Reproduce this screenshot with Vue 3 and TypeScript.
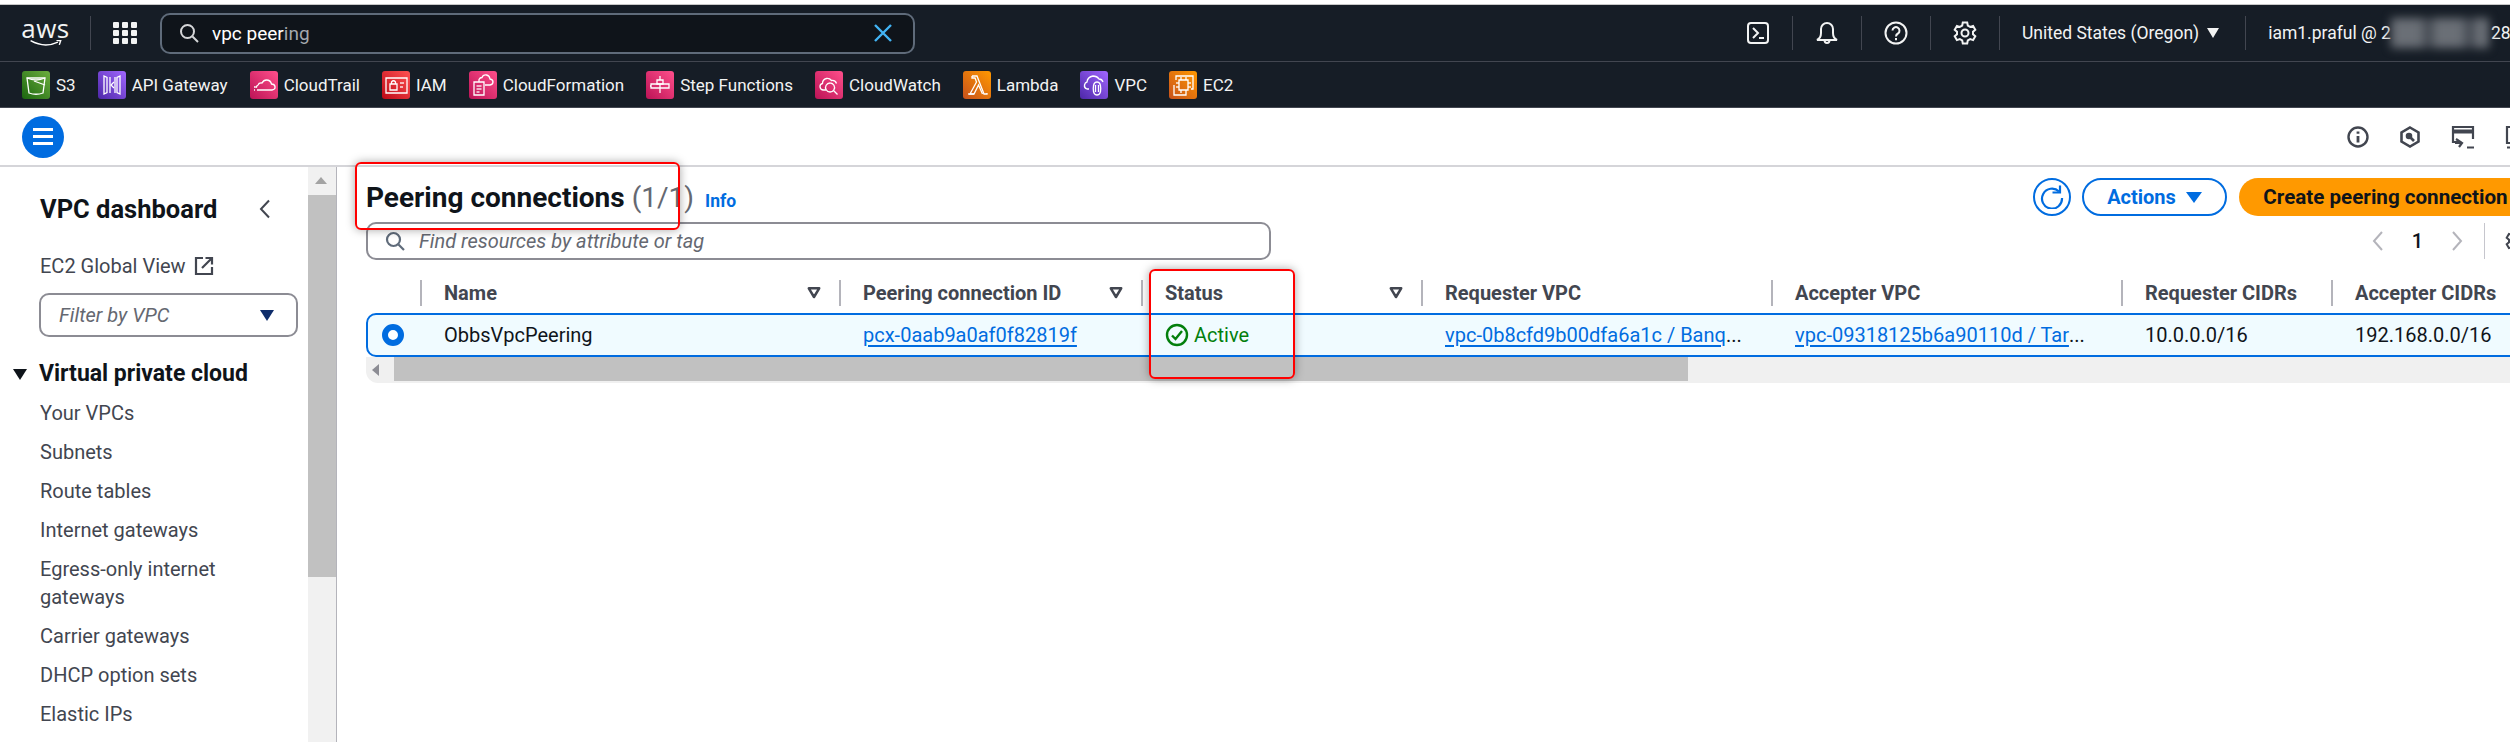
<script setup lang="ts">
interface Service {
  name: string
  tone: string
  paths: string[]
}

const services: Service[] = [
  { name: 'S3', tone: 'green', paths: ['M5 7h18l-2 15q-7 2.5-14 0z', 'M5 7q9 4 18 0', 'M12 10l11 4'] },
  { name: 'API Gateway', tone: 'purple', paths: ['M6 5v18l3-1.5v-15z', 'M22 5v18l-3-1.5v-15z', 'M12 6v16', 'M17 6v16', 'M16 11l-3 3 3 3'] },
  { name: 'CloudTrail', tone: 'pink', paths: ['M7 19h15q3.500-.5 3-3.500-.5-2.500-3.500-2.500-1-4-5-4-3 0-4.500 3-3-.5-4 2-1.500.5-1.500 2.500', 'M4 16h3', 'M4 19h1'] },
  { name: 'IAM', tone: 'red', paths: ['M4 7h21v15H4z', 'M8 13h7v6H8z', 'M9.500 13v-2q2-2.500 4 0v2', 'M18 12h4', 'M18 16h3'] },
  { name: 'CloudFormation', tone: 'pink', paths: ['M5 11h10v13H5z', 'M7.500 15h5', 'M7.500 18h5', 'M7.500 21h3', 'M10 11V8.500q1-2 3-2 1-3 4.500-2.500 3 .5 3.500 4 3 .5 3 3t-3 3h-5'] },
  { name: 'Step Functions', tone: 'pink', paths: ['M11 9h6v4h-6z', 'M5 13h18v4H5z', 'M14 5v4', 'M14 17v5', 'M14 13v4', 'M5 15h-1'] },
  { name: 'CloudWatch', tone: 'pink', paths: ['M11 19H8q-3-.5-3-3.500 0-2.500 2.500-3 0-4 4-5 3-.5 5 2 4-.5 5 3', 'M15 12a4.500 4.500 0 1 0 .1 0', 'M18.500 19.500l4 4'] },
  { name: 'Lambda', tone: 'orange', paths: ['M9 5h5l7 18h3v-1', 'M9 5v2h3l1.500 4L7 23h4l4.500-9 4 9', 'M5 23h6'] },
  { name: 'VPC', tone: 'purple', paths: ['M9 18H7q-3-1-2.500-4 .5-2.500 2.500-3 .5-5 6-6 4 0 6 3 3 0 4 3', 'M17 11c-5 0-5 13 0 13s5-13 0-13', 'M15.500 14v7', 'M18.500 14v7'] },
  { name: 'EC2', tone: 'orange', paths: ['M10 9h9v10h-9z', 'M12 6v3', 'M17 6v3', 'M12 19v3', 'M17 19v3', 'M7 12h3', 'M7 16h3', 'M19 12h3', 'M19 16h3', 'M7 9V5h17v13h-2', 'M5 14v10h12v-2'] },
]

const navItems = [
  'Your VPCs',
  'Subnets',
  'Route tables',
  'Internet gateways',
  'Egress-only internet gateways',
  'Carrier gateways',
  'DHCP option sets',
  'Elastic IPs',
]

const columns = [
  { label: 'Name', filter: true },
  { label: 'Peering connection ID', filter: true },
  { label: 'Status', filter: true },
  { label: 'Requester VPC', filter: false },
  { label: 'Accepter VPC', filter: false },
  { label: 'Requester CIDRs', filter: false },
  { label: 'Accepter CIDRs', filter: false },
]
</script>

<template>
  <div class="page">
    <div class="top-line"></div>

    <header class="nav">
      <div class="aws-logo">
        <span class="aws-word">aws</span>
        <svg class="aws-smile" viewBox="0 0 46 10" width="46" height="10" fill="none">
          <path d="M1 1q20 11 39 2" stroke="#fff" stroke-width="2" />
          <path d="M38 .5l6 .5-2 6" stroke="#fff" stroke-width="2" />
        </svg>
      </div>
      <span class="nav-rule logo-rule"></span>
      <svg class="grid-icon" viewBox="0 0 24 22" width="24" height="22" fill="#f2f3f3">
        <rect v-for="c in 9" :key="c" :x="((c - 1) % 3) * 9" :y="Math.floor((c - 1) / 3) * 8" width="6" height="6" rx="1" />
      </svg>
      <div class="search">
        <svg viewBox="0 0 20 20" width="20" height="20" fill="none" stroke="#d5d6d8" stroke-width="2">
          <circle cx="8.500" cy="8.500" r="6.500" />
          <path d="M13.500 13.500l5.500 5.500" />
        </svg>
        <span class="search-text">vpc peer<span class="search-rest">ing</span></span>
        <svg class="clear" viewBox="0 0 20 20" width="20" height="20" fill="none" stroke="#42b4f5" stroke-width="2.400">
          <path d="M2 2l16 16M18 2L2 18" />
        </svg>
      </div>

      <div class="nav-right">
        <svg viewBox="0 0 24 24" width="24" height="24" fill="none" stroke="#f2f3f3" stroke-width="2">
          <rect x="2" y="2" width="20" height="20" rx="3" />
          <path d="M7 7l5 5-5 5M13 17h5" />
        </svg>
        <span class="nav-rule"></span>
        <svg viewBox="0 0 24 24" width="24" height="24" fill="none" stroke="#f2f3f3" stroke-width="2">
          <path d="M2 19q4-2 4-7V8a6 6 0 0 1 12 0v4q0 5 4 7z" />
          <path d="M9.500 19a2.500 3 0 0 0 5 0" />
        </svg>
        <span class="nav-rule"></span>
        <svg viewBox="0 0 24 24" width="24" height="24" fill="none" stroke="#f2f3f3" stroke-width="2">
          <circle cx="12" cy="12" r="10.500" />
          <path d="M8.500 9.500a3.500 3.500 0 1 1 5.500 3q-2 1-2 3" />
          <path d="M12 17v2.200" />
        </svg>
        <span class="nav-rule"></span>
        <svg viewBox="0 0 24 24" width="24" height="24" fill="none" stroke="#f2f3f3" stroke-width="2">
          <circle cx="12" cy="12" r="3.500" />
          <path d="M9.800 1.500h4.400l.6 3 2.400 1.400 2.900-1 2.200 3.800-2.300 2v2.600l2.300 2-2.200 3.800-2.900-1-2.400 1.400-.6 3H9.800l-.6-3-2.400-1.400-2.900 1-2.200-3.800 2.300-2v-2.600l-2.300-2 2.200-3.800 2.900 1 2.400-1.400z" />
        </svg>
        <span class="nav-rule"></span>
        <span class="region">United States (Oregon)</span>
        <i class="caret-white"></i>
        <span class="nav-rule"></span>
        <span class="account">iam1.praful @ 2<span class="smudge"></span>284</span>
      </div>
    </header>

    <nav class="services">
      <div v-for="s in services" :key="s.name" class="service">
        <span class="service-icon" :class="s.tone">
          <svg viewBox="0 0 28 28" width="28" height="28" fill="none" stroke="#fff" stroke-width="1.300">
            <path v-for="d in s.paths" :key="d" :d="d" />
          </svg>
        </span>
        <span>{{ s.name }}</span>
      </div>
    </nav>

    <div class="toolbar">
      <span class="burger"><i></i><i></i><i></i></span>
      <div class="tools">
        <svg viewBox="0 0 22 22" width="22" height="22" fill="none" stroke="#424650" stroke-width="2.400">
          <circle cx="11" cy="11" r="9.500" />
          <path d="M11 10v6.500M11 5.500v2.200" stroke-width="2.800" />
        </svg>
        <svg viewBox="0 0 22 22" width="22" height="22" fill="none" stroke="#424650" stroke-width="2.600">
          <path d="M11 1.500l8.500 5v9l-8.500 5-8.500-5v-9z" />
          <path d="M15 15l-4-4" />
          <circle cx="10" cy="10" r="2" fill="#424650" />
        </svg>
        <svg viewBox="0 0 24 24" width="24" height="24" fill="none" stroke="#424650" stroke-width="2.200">
          <path d="M9 17H2V2h20v12" />
          <path d="M2 6.500h20" stroke-width="4" />
          <path d="M5 14l6 4-3 4M4 18h7M16 22.500h7" />
        </svg>
        <svg viewBox="0 0 24 24" width="24" height="24" fill="none" stroke="#424650" stroke-width="2.200">
          <path d="M2 18V2h20v16zM2 22.500h20" />
        </svg>
      </div>
    </div>

    <div class="main">
      <aside class="sidebar">
        <div class="side-body">
          <div class="side-head">
            <h2>VPC dashboard</h2>
            <svg viewBox="0 0 14 20" width="14" height="20" fill="none" stroke="#424650" stroke-width="2">
              <path d="M11 1.500L3 10l8 8.500" />
            </svg>
          </div>
          <div class="global-view">
            <span>EC2 Global View</span>
            <svg viewBox="0 0 20 20" width="20" height="20" fill="none" stroke="#424650" stroke-width="2.200">
              <path d="M9 2H2v16h16v-7" />
              <path d="M8 12L18 2M11.500 2H18v6.500" />
            </svg>
          </div>
          <div class="vpc-filter">
            <em>Filter by VPC</em>
            <i class="caret-navy"></i>
          </div>
          <div class="side-section"><i class="caret-black"></i>Virtual private cloud</div>
          <ul class="side-list">
            <li v-for="item in navItems" :key="item">{{ item }}</li>
          </ul>
        </div>
        <div class="side-scroll">
          <i class="scroll-up"></i>
          <div class="side-thumb"></div>
        </div>
      </aside>

      <section class="content">
        <div class="head-row">
          <h1>Peering connections <span class="count">(1/1)</span></h1>
          <a class="info">Info</a>
          <div class="actions">
            <span class="refresh">
              <svg viewBox="0 0 24 24" width="24" height="24" fill="none" stroke="#006ce0" stroke-width="2.200">
                <path d="M19 6.500A10 10 0 1 0 22 13" />
                <path d="M12.500 7.500h7.500V0.500" />
              </svg>
            </span>
            <button class="btn-actions">Actions <i class="caret-blue"></i></button>
            <button class="btn-create">Create peering connection</button>
          </div>
        </div>

        <div class="filter-row">
          <div class="find">
            <svg viewBox="0 0 20 20" width="20" height="20" fill="none" stroke="#5f6b7a" stroke-width="2.200">
              <circle cx="8.500" cy="8.500" r="6.500" />
              <path d="M13.500 13.500l5.500 5.500" />
            </svg>
            <em>Find resources by attribute or tag</em>
          </div>
          <div class="pager">
            <svg viewBox="0 0 12 22" width="12" height="22" fill="none" stroke="#b4b4bb" stroke-width="2">
              <path d="M10 2L2 11l8 9" />
            </svg>
            <span class="page-no">1</span>
            <svg viewBox="0 0 12 22" width="12" height="22" fill="none" stroke="#b4b4bb" stroke-width="2">
              <path d="M2 2l8 9-8 9" />
            </svg>
            <span class="pager-rule"></span>
            <svg viewBox="0 0 24 24" width="24" height="24" fill="none" stroke="#424650" stroke-width="2">
              <circle cx="12" cy="12" r="3.500" />
              <path d="M9.800 1.500h4.400l.6 3 2.400 1.400 2.900-1 2.200 3.800-2.300 2v2.600l2.300 2-2.200 3.800-2.900-1-2.400 1.400-.6 3H9.800l-.6-3-2.400-1.400-2.900 1-2.200-3.800 2.300-2v-2.600l-2.300-2 2.200-3.800 2.900 1 2.400-1.400z" />
            </svg>
          </div>
        </div>

        <div class="table-grid table-head">
          <span class="head-cell radio-cell"></span>
          <div v-for="col in columns" :key="col.label" class="head-cell">
            <span>{{ col.label }}</span>
            <svg v-if="col.filter" class="sort" viewBox="0 0 14 12" width="14" height="12" fill="none" stroke="#424650" stroke-width="2.500">
              <path d="M1.800 1.300h10.400L7 10z" stroke-linejoin="round" />
            </svg>
          </div>
        </div>

        <div class="table-grid table-row">
          <span class="radio"></span>
          <span class="cell">ObbsVpcPeering</span>
          <span class="cell"><a class="link">pcx-0aab9a0af0f82819f</a></span>
          <span class="cell active">
            <svg viewBox="0 0 24 24" width="24" height="24" fill="none" stroke="#037f0c" stroke-width="2.400">
              <circle cx="12" cy="12" r="10" />
              <path d="M7 12.500l3.500 3.500L17 8" />
            </svg>
            Active
          </span>
          <span class="cell"><a class="link">vpc-0b8cfd9b00dfa6a1c / Banq</a>...</span>
          <span class="cell"><a class="link">vpc-09318125b6a90110d / Tar</a>...</span>
          <span class="cell">10.0.0.0/16</span>
          <span class="cell">192.168.0.0/16</span>
        </div>

        <div class="table-scroll">
          <i class="scroll-left"></i>
          <div class="table-thumb"></div>
        </div>
      </section>
    </div>

    <div class="callout callout-title"></div>
    <div class="callout callout-status"></div>
  </div>
</template>

<style>
html,
body {
  margin: 0;
  background: #fff;
}
</style>

<style scoped>
.page {
  position: relative;
  width: 2510px;
  height: 742px;
  overflow: hidden;
  background: #fff;
  color: #0f141a;
  font-family: Roboto, "Open Sans", sans-serif;
  font-size: 20px;
}

.top-line {
  height: 5px;
  box-sizing: border-box;
  border-bottom: 1px solid #c8c8c8;
}

.nav {
  display: flex;
  align-items: center;
  height: 56px;
  padding-left: 23px;
  background: #161d26;
  border-bottom: 1px solid #424650;
  color: #f2f3f3;
}

.nav > * {
  flex-shrink: 0;
}

.aws-logo {
  display: flex;
  flex-direction: column;
  align-items: center;
  width: 45px;
  height: 30px;
  margin-top: -2px;
}

.aws-word {
  font-family: "Open Sans", sans-serif;
  font-size: 26px;
  line-height: 22px;
  letter-spacing: 0.5px;
}

.aws-smile {
  margin-top: 1px;
}

.nav-rule {
  width: 1px;
  height: 34px;
  background: #424650;
}

.logo-rule {
  margin: 0 22px;
}

.grid-icon {
  margin-right: 23px;
}

.search {
  display: flex;
  align-items: center;
  width: 755px;
  height: 41px;
  box-sizing: border-box;
  padding: 0 20px 0 17px;
  background: #0f141a;
  border: 2px solid #5f6b7a;
  border-radius: 10px;
  font-size: 19px;
}

.search-text {
  margin-left: 13px;
  color: #fff;
}

.search-rest {
  color: #a4a8ad;
}

.clear {
  margin-left: auto;
}

.nav-right {
  display: flex;
  align-items: center;
  gap: 22px;
  margin-left: 831px;
  white-space: nowrap;
  font-size: 17.500px;
}

.region {
  margin-right: -14px;
}

.caret-white {
  width: 0;
  height: 0;
  margin-right: 4px;
  border: 6px solid transparent;
  border-top: 10px solid #f2f3f3;
  border-bottom: 0;
}

.account {
  display: flex;
  align-items: center;
}

.smudge {
  width: 98px;
  height: 30px;
  margin-right: 2px;
  background: linear-gradient(90deg, #6a6f76 0 30%, #3a4049 38%, #6a6f76 46% 72%, #3a4049 80%, #6a6f76 88%);
  filter: blur(5px);
}

.services {
  display: flex;
  align-items: center;
  gap: 22px;
  height: 45px;
  padding-left: 22px;
  background: #161d26;
  border-bottom: 1px solid #424650;
  color: #f2f3f3;
  font-size: 17px;
  white-space: nowrap;
}

.service {
  display: flex;
  align-items: center;
  gap: 6px;
}

.service-icon {
  display: block;
  width: 28px;
  height: 28px;
  border-radius: 3px;
}

.service-icon svg {
  display: block;
}

.green {
  background: linear-gradient(45deg, #1b660f, #6cae3e);
}

.purple {
  background: linear-gradient(45deg, #4d27a8, #a166ff);
}

.pink {
  background: linear-gradient(45deg, #bc1356, #ff4f8b);
}

.red {
  background: linear-gradient(45deg, #bd0816, #ff5252);
}

.orange {
  background: linear-gradient(45deg, #c8511b, #ff9900);
}

.toolbar {
  display: flex;
  align-items: center;
  height: 57px;
  padding-left: 22px;
  background: #fff;
}

.burger {
  display: flex;
  flex-direction: column;
  align-items: center;
  justify-content: center;
  gap: 4px;
  width: 42px;
  height: 42px;
  border-radius: 50%;
  background: #006ce0;
}

.burger i {
  width: 20px;
  height: 3px;
  background: #fff;
}

.tools {
  display: flex;
  align-items: center;
  gap: 30px;
  margin-left: auto;
  margin-right: -19px;
}

.main {
  display: flex;
  height: 576px;
  border-top: 2px solid #d5d5d9;
}

.sidebar {
  display: flex;
  width: 337px;
  flex-shrink: 0;
  box-sizing: border-box;
  border-right: 1px solid #b4b4bb;
}

.side-body {
  width: 308px;
  flex-shrink: 0;
  box-sizing: border-box;
  padding: 28px 10px 0 0;
}

.side-head {
  display: flex;
  align-items: center;
  justify-content: space-between;
  height: 28px;
  padding: 0 26px 0 40px;
}

.side-head h2 {
  margin: 0;
  font-size: 25.500px;
  font-weight: 700;
}

.global-view {
  display: flex;
  align-items: center;
  gap: 8px;
  margin: 31px 0 0 40px;
  color: #424650;
}

.vpc-filter {
  display: flex;
  align-items: center;
  justify-content: space-between;
  height: 44px;
  box-sizing: border-box;
  margin: 15px 0 0 39px;
  padding: 0 22px 0 18px;
  border: 2px solid #8c8c94;
  border-radius: 10px;
  color: #656871;
}

.caret-navy {
  border: 7px solid transparent;
  border-top: 11px solid #0f2d6b;
  border-bottom: 0;
}

.side-section {
  position: relative;
  margin: 24px 0 0 39px;
  font-size: 23px;
  font-weight: 700;
  line-height: 26px;
}

.caret-black {
  position: absolute;
  left: -26px;
  top: 8px;
  border: 7px solid transparent;
  border-top: 11px solid #0f141a;
  border-bottom: 0;
}

.side-list {
  margin: 12px 0 0;
  padding: 0 30px 0 40px;
  list-style: none;
  color: #424650;
  line-height: 28px;
}

.side-list li {
  margin-bottom: 11px;
}

.side-scroll {
  position: relative;
  flex: 1;
  background: #f1f1f1;
  padding-top: 28px;
}

.scroll-up {
  position: absolute;
  left: 7px;
  top: 10px;
  border: 6px solid transparent;
  border-bottom: 7px solid #a3a3a3;
  border-top: 0;
}

.side-thumb {
  height: 382px;
  background: #c1c1c1;
}

.content {
  flex: 1;
  min-width: 0;
  padding: 11px 0 0 29px;
}

.head-row {
  display: flex;
  align-items: center;
  height: 38px;
}

h1 {
  margin: 0;
  font-size: 28px;
  font-weight: 700;
  white-space: nowrap;
}

.count {
  color: #656871;
  font-weight: 400;
}

.info {
  margin: 7px 0 0 11px;
  color: #006ce0;
  font-size: 17.500px;
  font-weight: 700;
}

.actions {
  display: flex;
  align-items: center;
  margin-left: auto;
  margin-right: -22px;
}

.refresh {
  display: flex;
  align-items: center;
  justify-content: center;
  width: 38px;
  height: 38px;
  box-sizing: border-box;
  border: 2px solid #006ce0;
  border-radius: 50%;
}

button {
  font: inherit;
  font-weight: 700;
  height: 38px;
  border-radius: 19px;
  white-space: nowrap;
}

.btn-actions {
  display: flex;
  align-items: center;
  justify-content: center;
  gap: 10px;
  width: 145px;
  margin: 0 12px 0 11px;
  padding: 0;
  background: #fff;
  border: 2px solid #006ce0;
  color: #006ce0;
}

.caret-blue {
  border: 8px solid transparent;
  border-top: 11px solid #006ce0;
  border-bottom: 0;
}

.btn-create {
  width: 293px;
  padding: 0;
  background: #ff9900;
  border: 0;
  color: #0f141a;
  font-size: 20.600px;
}

.filter-row {
  display: flex;
  align-items: center;
  margin-top: 6px;
  height: 38px;
}

.find {
  display: flex;
  align-items: center;
  gap: 14px;
  width: 905px;
  height: 38px;
  box-sizing: border-box;
  padding-left: 17px;
  border: 2px solid #8c8c94;
  border-radius: 10px;
  color: #656871;
}

.pager {
  display: flex;
  align-items: center;
  margin-left: auto;
  margin-right: -19px;
}

.page-no {
  margin: 0 28px;
  font-weight: 500;
}

.pager-rule {
  width: 1px;
  height: 36px;
  margin: 0 20px 0 21px;
  background: #c6c6cd;
}

.table-grid {
  display: grid;
  grid-template-columns: 54px 419px 302px 280px 350px 350px 210px 200px;
}

.table-head {
  height: 26px;
  margin-top: 20px;
  color: #424650;
  font-weight: 700;
}

.head-cell {
  display: flex;
  align-items: center;
  justify-content: space-between;
  padding: 0 18px 0 22px;
  border-left: 2px solid #b4b4bb;
  box-sizing: border-box;
  white-space: nowrap;
}

.radio-cell {
  border-left: 0;
}

.table-row {
  align-items: center;
  height: 44px;
  margin-top: 7px;
  box-sizing: border-box;
  width: 2180px;
  background: #f0fbff;
  border: 2.500px solid #006ce0;
  border-radius: 10px 0 0 10px;
}

.radio {
  width: 22px;
  height: 22px;
  box-sizing: border-box;
  margin-left: 14px;
  border: 6px solid #006ce0;
  border-radius: 50%;
  background: #fff;
}

.cell {
  display: flex;
  align-items: center;
  padding-left: 22px;
  white-space: nowrap;
}

.link {
  color: #006ce0;
  text-decoration: underline;
  text-underline-offset: 3px;
}

.active {
  gap: 5px;
  color: #037f0c;
}

.table-scroll {
  display: flex;
  align-items: center;
  width: 2180px;
  height: 26px;
  background: #f0f0f0;
  border-radius: 0 0 0 12px;
}

.scroll-left {
  margin: 0 15px 0 6px;
  border: 6px solid transparent;
  border-right: 7px solid #8c8c94;
  border-left: 0;
}

.table-thumb {
  width: 1294px;
  height: 24px;
  align-self: flex-start;
  background: #c1c1c1;
}

.callout {
  position: absolute;
  box-sizing: border-box;
  border: 2px solid #f00;
  border-radius: 6px;
  box-shadow: 0 0 10px rgba(0, 0, 0, 0.35);
}

.callout-title {
  left: 355px;
  top: 162px;
  width: 325px;
  height: 68px;
}

.callout-status {
  left: 1149px;
  top: 269px;
  width: 146px;
  height: 110px;
}
</style>
